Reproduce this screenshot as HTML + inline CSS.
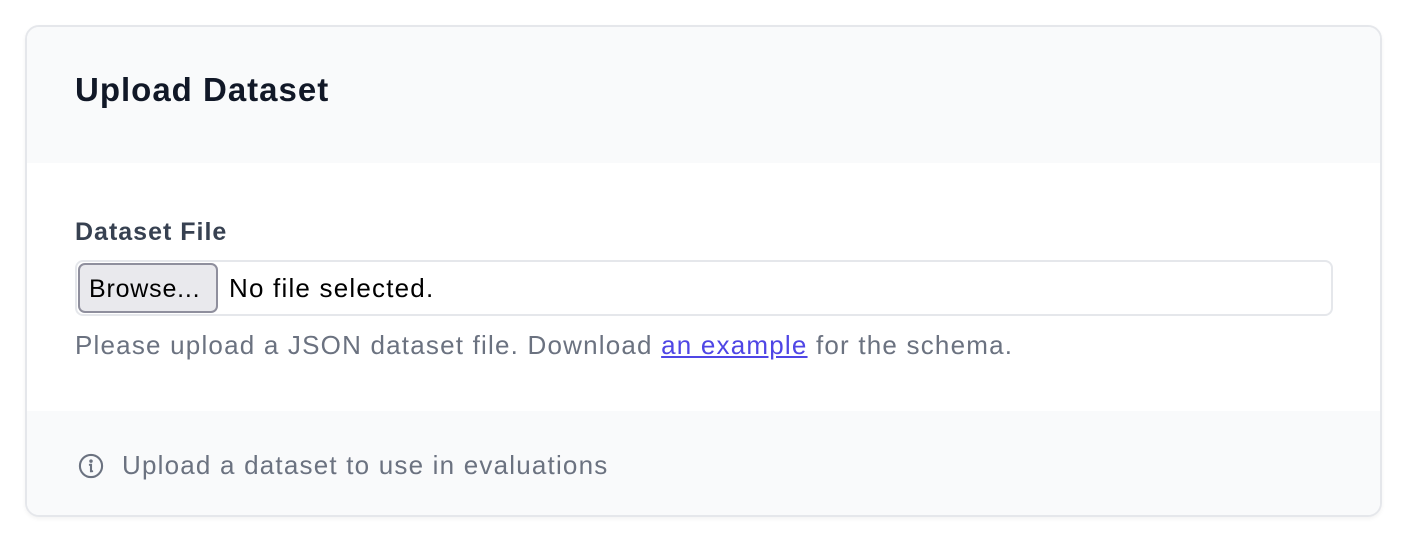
<!DOCTYPE html>
<html><head><style>
*{box-sizing:border-box;margin:0;padding:0}
body{width:1404px;height:534px;background:#fff;font-family:"Liberation Sans",sans-serif;position:relative}
.card{position:absolute;left:25px;top:25px;width:1357px;height:492px;border:2px solid #e5e7eb;border-radius:14px;overflow:hidden;box-shadow:0 2px 4px rgba(0,0,0,.05)}
.hdr{position:absolute;left:0;top:0;right:0;height:136px;background:#f9fafb}
.hdr h1{position:absolute;left:48px;top:44px;font-size:33px;font-weight:bold;color:#111827;letter-spacing:1px}
.lbl{position:absolute;left:48px;top:191px;font-size:25px;font-weight:bold;color:#374151;letter-spacing:1px}
.inp{position:absolute;left:48px;top:233px;width:1258px;height:56px;border:2px solid #e5e7eb;border-radius:8px;background:#fff}
.btn{position:absolute;left:1px;top:1px;width:140px;height:50px;border:2px solid #8f8f9d;border-radius:7px;background:#e9e9ed;font-size:25px;color:#000;padding:10px 0 0 9px;letter-spacing:0.8px}
.nf{position:absolute;left:152px;top:11px;font-size:26px;color:#000;letter-spacing:1.2px}
.help{position:absolute;left:48px;top:303px;font-size:26px;color:#6b7280;letter-spacing:1.2px}
.help a{color:#4f46e5;text-decoration:underline}
.ftr{position:absolute;left:0;top:384px;right:0;bottom:0;background:#f9fafb}
.ftr svg{position:absolute;left:50px;top:41px}
.ftr span{position:absolute;left:95px;top:39px;font-size:26px;color:#6b7280;letter-spacing:1.2px}
</style></head><body>
<div class="card">
<div class="hdr"><h1>Upload Dataset</h1></div>
<div class="lbl">Dataset File</div>
<div class="inp"><div class="btn">Browse...</div><div class="nf">No file selected.</div></div>
<div class="help">Please upload a JSON dataset file. Download <a>an example</a> for the schema.</div>
<div class="ftr">
<svg width="28" height="28" viewBox="0 0 24 24" fill="none" stroke="#6b7280" stroke-width="1.8" stroke-linecap="round"><circle cx="12" cy="12" r="9.5"/><path d="M11 11h1v5.5h1"/><circle cx="12" cy="7.8" r=".6" fill="#6b7280"/></svg>
<span>Upload a dataset to use in evaluations</span>
</div>
</div>
</body></html>
